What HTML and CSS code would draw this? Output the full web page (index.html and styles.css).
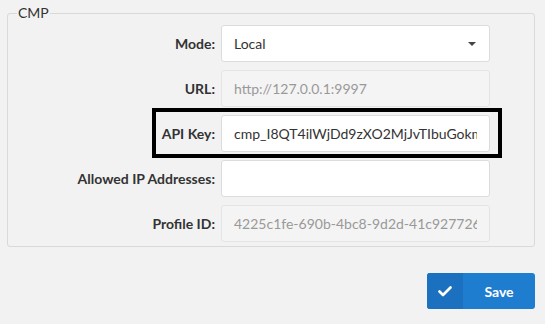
FILE: index.html
```html
<!DOCTYPE html>
<html>
<head>
<meta charset="utf-8">
<link rel="stylesheet" href="styles.css">
</head>
<body>
<div class="page">
  <fieldset class="group">
    <legend class="group-title">CMP</legend>
    <div class="row">
      <label class="label">Mode:</label>
      <div class="input select">
        <span class="value">Local</span>
        <span class="caret"></span>
      </div>
    </div>
    <div class="row">
      <label class="label">URL:</label>
      <div class="input disabled"><span class="value">http://127.0.0.1:9997</span></div>
    </div>
    <div class="row row-highlight">
      <label class="label">API Key:</label>
      <div class="input"><span class="value">cmp_I8QT4ilWjDd9zXO2MjJvTIbuGokmQx</span></div>
      <div class="highlight"></div>
    </div>
    <div class="row">
      <label class="label">Allowed IP Addresses:</label>
      <div class="input"><span class="value"></span></div>
    </div>
    <div class="row">
      <label class="label">Profile ID:</label>
      <div class="input disabled"><span class="value">4225c1fe-690b-4bc8-9d2d-41c927726e8a</span></div>
    </div>
  </fieldset>
  <div class="actions">
    <button class="btn-save">
      <span class="btn-icon">
        <svg width="14" height="11" viewBox="0 0 14 11"><path d="M1.5 5.5 L5 9 L12.5 1.5" fill="none" stroke="#fff" stroke-width="2.6" stroke-linecap="round" stroke-linejoin="round"/></svg>
      </span>
      <span class="btn-text">Save</span>
    </button>
  </div>
</div>
</body>
</html>
```
FILE: styles.css
```css
html, body {
  margin: 0;
  padding: 0;
  background: #f2f2f2;
  font-family: Lato, "Open Sans", sans-serif;
  font-size: 14px;
  color: #333;
}
.page {
  padding: 3px 10px 0 7px;
  width: 528px;
}
.group {
  margin: 0;
  padding: 2px 0 4px 0;
  border: 1px solid #d9d9d9;
  border-radius: 3px;
  display: flex;
  flex-direction: column;
  gap: 8px;
}
.group-title {
  padding: 0 1px;
  margin-left: 9px;
  line-height: 20px;
  color: #333;
}
.row {
  display: flex;
  align-items: center;
  position: relative;
}
.label {
  width: 207px;
  text-align: right;
  font-weight: bold;
  margin-right: 6px;
}
.input {
  box-sizing: border-box;
  width: 269px;
  height: 37px;
  background: #fff;
  border: 1px solid #dcdcdc;
  border-radius: 3px;
  padding: 0 12px;
  display: flex;
  align-items: center;
  overflow: hidden;
  white-space: nowrap;
}
.input .value {
  overflow: hidden;
  flex: 1;
}
.input.disabled {
  background: #f4f4f4;
  border-color: #e4e4e4;
  color: #999;
}
.caret {
  width: 0;
  height: 0;
  border-left: 4px solid transparent;
  border-right: 4px solid transparent;
  border-top: 4px solid #444;
  margin-right: 1px;
}
.highlight {
  position: absolute;
  left: 144px;
  top: -7px;
  width: 350px;
  height: 50px;
  box-sizing: border-box;
  border: 4px solid #000;
  pointer-events: none;
}
.actions {
  display: flex;
  justify-content: flex-end;
  margin-top: 26px;
}
.btn-save {
  width: 108px;
  height: 36px;
  border: 0;
  padding: 0;
  border-radius: 3px;
  background: #1f7dd0;
  color: #fff;
  font-family: Lato, sans-serif;
  font-size: 14px;
  font-weight: bold;
  display: flex;
  overflow: hidden;
}
.btn-icon {
  width: 36px;
  height: 36px;
  background: #1b71c0;
  display: flex;
  align-items: center;
  justify-content: center;
}
.btn-text {
  flex: 1;
  display: flex;
  align-items: center;
  justify-content: center;
}
```
